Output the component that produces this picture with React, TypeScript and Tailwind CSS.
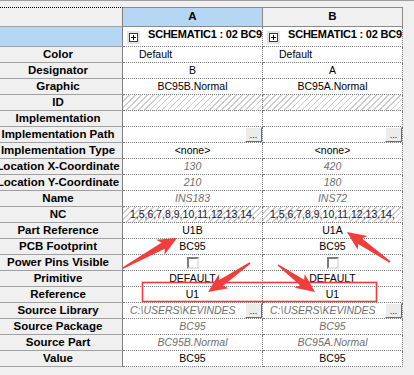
import React from 'react';

type Cell =
  | { t: 'text'; v: string; i?: boolean; left?: boolean }
  | { t: 'hatch'; v?: string }
  | { t: 'btn'; v?: string }
  | { t: 'check' }
  | { t: 'empty' };

const txt = (v: string, i = false): Cell => ({ t: 'text', v, i });

const NC = '1,5,6,7,8,9,10,11,12,13,14,';
const LIB = 'C:\\USERS\\KEVINDES';

const rows: [string, Cell, Cell][] = [
  ['Color', { t: 'text', v: 'Default', left: true }, { t: 'text', v: 'Default', left: true }],
  ['Designator', txt('B'), txt('A')],
  ['Graphic', txt('BC95B.Normal'), txt('BC95A.Normal')],
  ['ID', { t: 'hatch' }, { t: 'hatch' }],
  ['Implementation', { t: 'empty' }, { t: 'empty' }],
  ['Implementation Path', { t: 'btn' }, { t: 'btn' }],
  ['Implementation Type', txt('<none>'), txt('<none>')],
  ['Location X-Coordinate', txt('130', true), txt('420', true)],
  ['Location Y-Coordinate', txt('210', true), txt('180', true)],
  ['Name', txt('INS183', true), txt('INS72', true)],
  ['NC', { t: 'hatch', v: NC }, { t: 'hatch', v: NC }],
  ['Part Reference', txt('U1B'), txt('U1A')],
  ['PCB Footprint', txt('BC95'), txt('BC95')],
  ['Power Pins Visible', { t: 'check' }, { t: 'check' }],
  ['Primitive', txt('DEFAULT'), txt('DEFAULT')],
  ['Reference', txt('U1'), txt('U1')],
  ['Source Library', { t: 'btn', v: LIB }, { t: 'btn', v: LIB }],
  ['Source Package', txt('BC95', true), txt('BC95', true)],
  ['Source Part', txt('BC95B.Normal', true), txt('BC95A.Normal', true)],
  ['Value', txt('BC95'), txt('BC95')],
];

// red annotation arrows: tail -> tip
const arrows: [number, number, number, number][] = [
  [123, 268, 177, 238],
  [250, 263, 208, 292],
  [278, 265, 315, 292],
  [390, 262, 347, 232],
];

function arrowPoints(x1: number, y1: number, x2: number, y2: number) {
  const dx = x2 - x1;
  const dy = y2 - y1;
  const len = Math.hypot(dx, dy);
  const ux = dx / len;
  const uy = dy / len;
  const nx = -uy;
  const ny = ux;
  const head = 16;
  const bx = x2 - ux * head;
  const by = y2 - uy * head;
  const barbX = bx - ux * 3;
  const barbY = by - uy * 3;
  const pts = [
    [x1 + nx * 0.8, y1 + ny * 0.8],
    [bx + nx * 3.4, by + ny * 3.4],
    [barbX + nx * 8.5, barbY + ny * 8.5],
    [x2, y2],
    [barbX - nx * 8.5, barbY - ny * 8.5],
    [bx - nx * 3.4, by - ny * 3.4],
    [x1 - nx * 0.8, y1 - ny * 0.8],
  ];
  return pts.map(p => p[0].toFixed(1) + ',' + p[1].toFixed(1)).join(' ');
}

const hatch =
  'bg-[image:repeating-linear-gradient(135deg,#cdcdcd_0px,#cdcdcd_1px,transparent_1px,transparent_4.2px)]';

function EllipsisButton() {
  return (
    <div className="w-[17px] h-[15px] shrink-0 bg-[#ececec] border border-t-white border-l-white border-r-[#6e6e6e] border-b-[#6e6e6e] flex items-end justify-center text-[9px] leading-[9px] pb-[1px] text-black">
      ...
    </div>
  );
}

function DataCell({ cell }: { cell: Cell }) {
  const base =
    'w-[140px] shrink-0 h-full border-r border-b border-dotted border-[#7a7a7a] overflow-hidden flex items-center bg-white text-[10.5px] whitespace-nowrap';

  if (cell.t === 'text') {
    return (
      <div className={`${base} pt-[1px] ${cell.left ? 'justify-start pl-[16px]' : 'justify-center'}`}>
        <span className={cell.i ? 'italic text-[#6f6f6f]' : 'text-black'}>{cell.v}</span>
      </div>
    );
  }
  if (cell.t === 'hatch') {
    return (
      <div className={`${base} ${hatch} pl-[7px] pt-[1px]`}>
        {cell.v && <span className="text-[#1c1630]">{cell.v}</span>}
      </div>
    );
  }
  if (cell.t === 'btn') {
    return (
      <div className={`${base} justify-between pl-[7px]`}>
        <span className="italic text-[#6f6f6f] pt-[1px]">{cell.v ?? ''}</span>
        <EllipsisButton />
      </div>
    );
  }
  if (cell.t === 'check') {
    return (
      <div className={`${base} justify-center`}>
        <div className="w-[12px] h-[12px] bg-white border-2 border-t-[#7c7c7c] border-l-[#7c7c7c] border-r-[#e4e4e4] border-b-[#e4e4e4]" />
      </div>
    );
  }
  return <div className={base} />;
}

function PlusBox() {
  return (
    <div className="w-[13px] h-[13px] shrink-0 bg-[#e2e2e2] flex items-center justify-center">
      <svg width="9" height="9" viewBox="0 0 9 9">
        <rect x="0.5" y="0.5" width="8" height="8" fill="#fff" stroke="#3a3a3a" />
        <path d="M2 4.5H7M4.5 2V7" stroke="#000" strokeWidth="1" />
      </svg>
    </div>
  );
}

export default function App() {
  return (
    <div className="relative w-[414px] h-[375px] overflow-hidden bg-[#f0f0f0] font-['Liberation_Sans',Arial,sans-serif] text-black">
      <div className="h-[7px] border-t border-[#a0a0a0]" />

      {/* column header row */}
      <div className="flex h-[20px]">
        <div className="w-[123px] shrink-0 border-t border-b border-r border-[#a0a0a0] [border-top-style:dotted] border-t-black border-r-[#808080]" />
        <div className="w-[140px] shrink-0 border-t border-b border-r border-[#8a8a8a] bg-[#b5d7f3] flex items-center justify-center text-[11.5px] font-bold">
          A
        </div>
        <div className="w-[140px] shrink-0 border-t border-b border-r border-[#8a8a8a] flex items-center justify-center text-[11.5px] font-bold">
          B
        </div>
      </div>

      {/* object row */}
      <div className="flex h-[20px]">
        <div className="w-[123px] shrink-0 border-b border-r border-[#a0a0a0] border-r-[#808080] bg-[#b5d7f3]" />
        {['SCHEMATIC1 : 02 BC95B', 'SCHEMATIC1 : 02 BC95A'].map(s => (
          <div
            key={s}
            className="w-[140px] shrink-0 h-full border-r border-b border-dotted border-[#7a7a7a] bg-white overflow-hidden flex items-start gap-[8px] pl-[4px] whitespace-nowrap"
          >
            <div className="mt-[4px]">
              <PlusBox />
            </div>
            <span className="text-[11px] tracking-[-0.2px] font-bold leading-[13px] mt-[1px]">{s}</span>
          </div>
        ))}
      </div>

      {rows.map(([label, a, b]) => (
        <div key={label} className="flex h-[16px]">
          <div className="w-[123px] shrink-0 h-full border-b border-r border-[#a0a0a0] border-r-[#808080] overflow-hidden flex items-center justify-center pr-[6px] pt-[1px] text-[11.5px] font-bold whitespace-nowrap">
            <span>{label}</span>
          </div>
          <DataCell cell={a} />
          <DataCell cell={b} />
        </div>
      ))}

      <svg className="absolute inset-0 pointer-events-none" width="414" height="375">
        <rect x="142.5" y="282.5" width="234" height="19" fill="none" stroke="#ec3a3d" strokeWidth="1.6" />
        {arrows.map((a, i) => (
          <polygon key={i} points={arrowPoints(a[0], a[1], a[2], a[3])} fill="#f23d3d" />
        ))}
      </svg>
    </div>
  );
}
